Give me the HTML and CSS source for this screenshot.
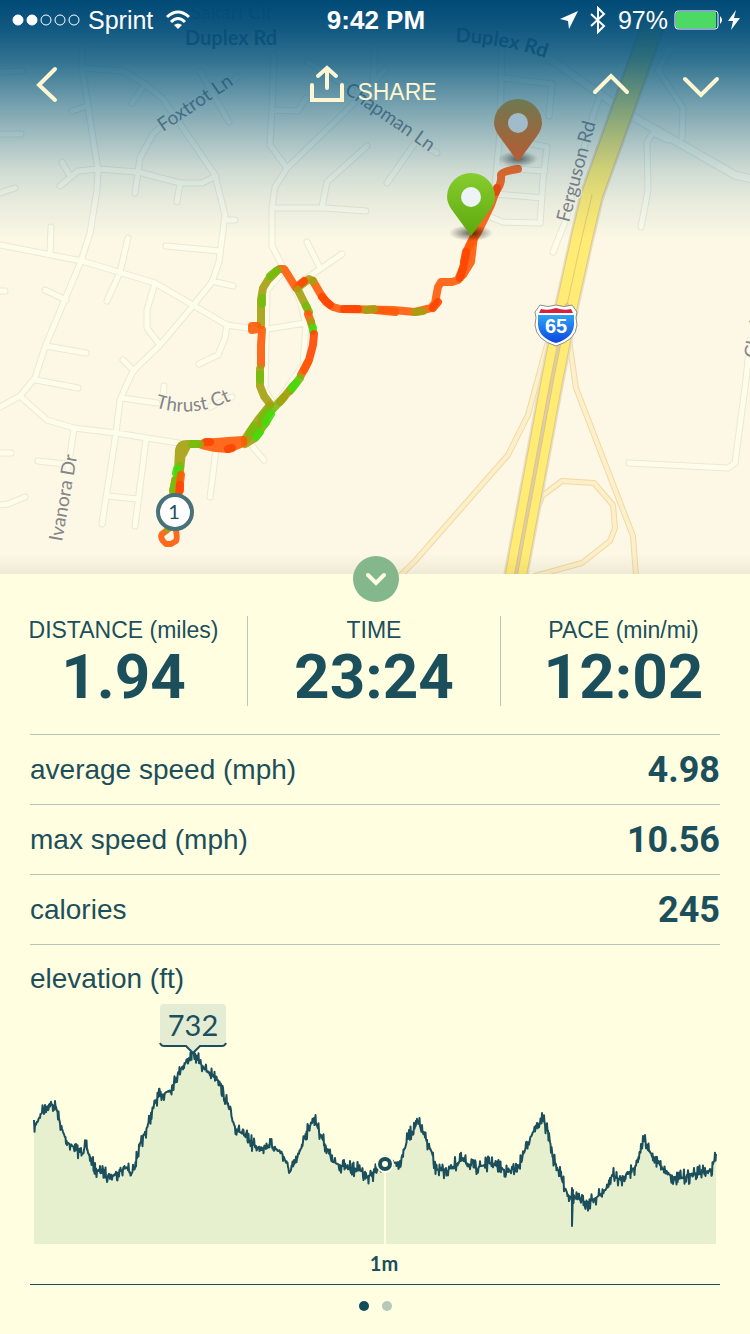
FILE: index.html
```html
<!DOCTYPE html>
<html lang="en">
<head>
    <meta charset="UTF-8">
    <meta name="viewport" content="width=device-width, initial-scale=1.0">
    <title>Run details</title>
    <link rel="stylesheet" href="styles.css">
</head>
<body>
    <header class="hero">
        <svg class="map" viewBox="0 0 750 574" role="img" aria-label="Map of the run">
            <defs>
                <linearGradient id="pinGreen" x1="0" y1="0" x2="0" y2="1">
                    <stop offset="0" stop-color="#86cd2e"/>
                    <stop offset="1" stop-color="#5ea80d"/>
                </linearGradient>
                <linearGradient id="pinBrown" x1="0" y1="0" x2="0" y2="1">
                    <stop offset="0" stop-color="#6c7a52"/>
                    <stop offset=".5" stop-color="#95693f"/>
                    <stop offset="1" stop-color="#b85c33"/>
                </linearGradient>
                <linearGradient id="shieldBlue" x1="0" y1="0" x2="0" y2="1">
                    <stop offset="0" stop-color="#2fa4f4"/>
                    <stop offset="1" stop-color="#0b45e0"/>
                </linearGradient>
                <radialGradient id="pinShadow">
                    <stop offset="0" stop-color="#000" stop-opacity=".6"/>
                    <stop offset="1" stop-color="#000" stop-opacity="0"/>
                </radialGradient>
                <linearGradient id="sky" x1="0" y1="0" x2="0" y2="1">
                    <stop offset="0" stop-color="#004a76"/>
                    <stop offset=".12" stop-color="#004d7a" stop-opacity=".93"/>
                    <stop offset=".25" stop-color="#00527c" stop-opacity=".81"/>
                    <stop offset=".42" stop-color="#00557f" stop-opacity=".56"/>
                    <stop offset=".55" stop-color="#005580" stop-opacity=".38"/>
                    <stop offset=".71" stop-color="#005580" stop-opacity=".18"/>
                    <stop offset=".84" stop-color="#005580" stop-opacity=".08"/>
                    <stop offset="1" stop-color="#005580" stop-opacity="0"/>
                </linearGradient>
                <linearGradient id="edge" x1="0" y1="0" x2="0" y2="1">
                    <stop offset="0" stop-color="#6b6040" stop-opacity="0"/>
                    <stop offset="1" stop-color="#6b6040" stop-opacity=".09"/>
                </linearGradient>

                <!-- side streets, stroked twice: casing, then surface -->
                <path id="streets" d="M82 40V68L98 170 97 190 90 233 81 261 45 347 35 378 20 396 0 407
                    M82 68L123 71 145 84 163 99 215 175 225 215 219 262 212 282 192 307 160 345 133 371 127 384 120 400 116 433 102 524
                    M145 84L132 103 M72 111L87 106 M62 162L70 176 M60 186L78 171 98 169 138 172 180 183 202 183 216 176
                    M163 125L153 134 140 158 138 172 135 193 M180 183L177 202 M200 71L229 122 M225 88L237 77
                    M274 55L272 110 270 145 287 168 275 187 272 208V246L300 300 306 325 303 365 274 407
                    M272 110L298 111 306 98 M287 168L345 112 385 70 M307 61L352 90 M322 207L327 182 367 146
                    M272 208L325 208 366 211 M0 72L22 71 M0 134L21 134 M0 193L15 188
                    M0 245L82 261 155 283 227 325 262 330 305 323 M51 227L50 254 M128 238L120 272 107 301
                    M166 246L220 251 M225 220H235 M212 281L233 286 M155 283L147 310V328L160 345
                    M227 325L225 338 218 355 199 364 M45 290L66 300 M46 346L86 353 M36 380L78 388 M123 360L134 371
                    M0 291H5 M307 242L320 268 M342 254L297 285 M283 272L267 290 265 390 274 405
                    M20 396L47 420 74 428 116 433 178 443 M74 428L70 455 68 468 M122 398L157 403 M164 386L163 398
                    M38 461L65 464 M0 453H11 M0 505L8 504 25 497 M146 439L135 526 M107 496L138 499
                    M216 450L210 497 M248 441L264 460 M210 407L232 397
                    M502 40L500 133 495 187 M503 78L552 84 549 116 M503 138L547 147 543 180 540 223 503 222 488 216
                    M500 168L545 171 M495 194L542 198 M415 143L387 183 M426 147L437 153
                    M672 45L658 70 683 108 682 138 M665 50H750 M668 140L653 133 647 142 648 190 641 227
                    M600 95L590 125 565 222 553 252 M375 45L373 90
                    M750 340L746 380 735 463 728 468 629 463 M0 44H750"/>
                <path id="ramps" d="M547 345L528 415 508 455 415 561 398 578 M569 340L576 388 633 536 636 576
                    M530 530L542 496 562 481 594 483 613 505 615 528 610 541 582 563 535 576"/>
                <path id="highway" d="M662 0L655 20 592 195 582 237 567 305 552 380 515 580"/>
                <path id="duplexCurve" d="M455 42Q510 44 554 61"/>
                <path id="chapmanCurve" d="M344 92C370 112 400 130 440 160"/>
                <path id="thrustCurve" d="M155 407Q195 420 238 397"/>
            </defs>

            <rect width="750" height="574" fill="#fcf8e5"/>
            <g fill="none" stroke-linecap="round" stroke-linejoin="round">
                <use href="#streets" stroke="#ece8d6" stroke-width="7"/>
                <path d="M540 52L630 115 735 175 752 179" stroke="#ece8d6" stroke-width="9"/>
                <use href="#streets" stroke="#fefdec" stroke-width="5"/>
                <path d="M540 52L630 115 735 175 752 179" stroke="#fefdec" stroke-width="7"/>
                <use href="#ramps" stroke="#f0d8a8" stroke-width="6"/>
                <use href="#ramps" stroke="#fdf0c8" stroke-width="4"/>
                <use href="#highway" stroke="#e4e0c8" stroke-width="25"/>
                <use href="#highway" stroke="#e9c77e" stroke-width="22"/>
                <use href="#highway" stroke="#ffec75" stroke-width="20"/>
                <path d="M592 195L582 237 567 305" stroke="#e8c877" stroke-width="1"/>
                <path d="M567 305L552 380 515 580" stroke="#e6c276" stroke-width="4"/>
                <path d="M567 305L552 380 515 580" stroke="#d9cfae" stroke-width="2"/>
            </g>

            <g class="street-name">
                <text class="faint" x="190" y="19">Sakari Cir</text>
                <text class="strong" x="185" y="45">Duplex Rd</text>
                <text class="strong"><textPath href="#duplexCurve">Duplex Rd</textPath></text>
                <text transform="translate(163 132) rotate(-34)">Foxtrot Ln</text>
                <text><textPath href="#chapmanCurve">Chapman Ln</textPath></text>
                <text transform="translate(569 223) rotate(-75)">Ferguson Rd</text>
                <text transform="translate(62 542) rotate(-80)">Ivanora Dr</text>
                <text><textPath href="#thrustCurve">Thrust Ct</textPath></text>
                <text transform="translate(757 359) rotate(-80)">Clark Rd</text>
            </g>

            <!-- interstate shield -->
            <g>
                <path d="M540 305Q548 308 556 305Q564 308 572 305L577 312Q575 317 577 325Q576 340 556 346Q536 340 535 325Q537 317 535 312Z" fill="#fff" stroke="#8f8f86" stroke-width="1"/>
                <path d="M541 309Q548 311 556 308Q564 311 571 309L573 313H539Z" fill="#d9203c"/>
                <path d="M538 315H574V325Q573 338 556 343Q539 338 538 325Z" fill="url(#shieldBlue)"/>
                <text class="shield-number" x="556" y="333">65</text>
            </g>

            <!-- route coloured by pace -->
            <g class="route">
                <path class="fast" d="M518 169Q502 171 501 175 502 184 496 191L491 205 478 232 467 250 463 268 458 280 452 282 441 282 438 287 435 303 431 308 415 312 393 310 340 309 333 307 326 302 320 293 313 281"/>
                <path class="fast" d="M474 236L471 262 463 275M395 312L375 310M474 236L469 246"/>
                <path class="hot" d="M344 309L358 309M330 305L322 297M463 268L460 278M438 302L433 308M466 252L464 262M497 188L496 192"/>
                <path class="mid" d="M313 281L309 279 297 288M366 310L374 309M415 312L423 311"/>
                <path class="hot" d="M299 285L304 281"/>
                <path class="fast" d="M296 288L288 275 284 269 280 269"/>
                <path class="mid" d="M278 270L268 280 263 288 261 300V325M298 290L307 308"/>
                <path class="slow" d="M276 271L270 276M306 306L309 312M262 298V304"/>
                <path class="fast" d="M257 326L252 326 252 330 257 329M262 330L261 345V365M308 314L311 322"/>
                <path class="mid" d="M260 369V386L264 396 270 404M311 322L312 326"/>
                <path class="slow" d="M260 374V380"/>
                <path class="lime" d="M313 328V331"/>
                <path class="hot" d="M314 334L313 345 309 360 304 370"/>
                <path class="fast" d="M308 362L301 375"/>
                <path class="slow" d="M300 378L290 391M284 397L270 412 255 430 246 440"/>
                <path class="mid" d="M293 386L280 402M270 405L258 420 245 439M266 422L255 438 245 444"/>
                <path class="slow" d="M268 410L262 417M254 426L250 432"/>
                <path class="lime" d="M271 414L265 424M260 432L256 437M296 383L292 388"/>
                <path class="fast" d="M243 443L228 449 215 448 202 445M243 440L228 441 204 443"/>
                <path class="hot" d="M228 449L232 448M206 442H210"/>
                <path class="mid" d="M200 444H187Q180 444 179 450L178 470M187 446L183 454M182 452L179 480M175 480L173 495"/>
                <path class="slow" d="M192 444H197M180 466L178 475M176 480L173 490"/>
                <path class="lime" d="M177 469L176 473"/>
                <path class="fast" d="M181 475L178 498"/>
                <path class="hot" d="M180 485V490"/>
                <path class="fast loop" d="M170 528L162 534Q160 537 163 541L166 544 171 544 176 541Q178 538 175 526"/>
                <path class="mid loop" d="M170 527L167 530"/>
            </g>

            <ellipse cx="471" cy="233" rx="22" ry="8" fill="url(#pinShadow)"/>
            <ellipse cx="518" cy="159" rx="20" ry="8" fill="url(#pinShadow)"/>
            <rect width="750" height="240" fill="url(#sky)"/>
            <path d="M518 162L499 136Q494 129 494 123A24 24 0 0 1 542 123Q542 129 537 136Z" fill="url(#pinBrown)"/>
            <circle cx="518" cy="123" r="10" fill="#a0bccb"/>
            <path d="M471 236L452 210Q447 203 447 197A24 24 0 0 1 495 197Q495 203 490 210Z" fill="url(#pinGreen)"/>
            <circle cx="471" cy="197" r="10" fill="#edf3f7"/>

            <circle cx="175" cy="512" r="17" fill="#fff" stroke="#48717a" stroke-width="4"/>
            <text class="mile-number" x="174" y="519">1</text>
            <rect y="554" width="750" height="20" fill="url(#edge)"/>
        </svg>

        <div class="overlay">
            <div class="status-bar">
                <div class="status-left">
                    <svg width="68" height="14" viewBox="0 0 68 14" aria-hidden="true">
                        <g fill="#fff" stroke="#fff">
                            <circle cx="6" cy="7" r="5"/>
                            <circle cx="20" cy="7" r="5"/>
                            <circle cx="34" cy="7" r="5" fill="none"/>
                            <circle cx="48" cy="7" r="5" fill="none"/>
                            <circle cx="62" cy="7" r="5" fill="none"/>
                        </g>
                    </svg>
                    <span>Sprint</span>
                    <svg class="wifi" width="26" height="20" viewBox="0 0 26 20" aria-hidden="true">
                        <g fill="none" stroke="#fff" stroke-width="3">
                            <path d="M2 7Q13-3 24 7"/>
                            <path d="M6 12Q13 5 20 12"/>
                        </g>
                        <path d="M9 15Q13 12 17 15L13 19Z" fill="#fff"/>
                    </svg>
                </div>
                <div class="clock">9:42 PM</div>
                <div class="status-right">
                    <svg class="service" width="18" height="18" viewBox="0 0 18 18" aria-hidden="true">
                        <path d="M18 0L9 18 8 10 0 8Z" fill="#fff"/>
                    </svg>
                    <svg class="service" width="16" height="28" viewBox="0 0 16 28" aria-hidden="true">
                        <path d="M1 8L14 20 8 26V2L14 8 1 20" fill="none" stroke="#fff" stroke-width="2"/>
                    </svg>
                    <span>97%</span>
                    <svg width="48" height="20" viewBox="0 0 48 20" aria-hidden="true">
                        <rect x="1" y="1" width="43" height="18" rx="3" fill="none" stroke="#fff" stroke-width="1"/>
                        <rect x="2" y="2" width="40" height="16" rx="1" fill="#4cd964"/>
                        <path d="M46 6Q50 10 46 14Z" fill="#fff"/>
                    </svg>
                    <svg width="12" height="20" viewBox="0 0 12 20" aria-hidden="true">
                        <path d="M8 0L0 11H5L3 20 12 8H6Z" fill="#fff"/>
                    </svg>
                </div>
            </div>
            <nav class="nav-bar">
                <button class="icon-button" aria-label="Back">
                    <svg width="34" height="40" viewBox="0 0 34 40"><path d="M29 5L13 21 29 36"/></svg>
                </button>
                <button class="icon-button share">
                    <svg width="36" height="40" viewBox="0 0 36 40"><path d="M3 21V36H33V21M18 24V4M9 12L18 4 27 12"/></svg>
                    <span>SHARE</span>
                </button>
                <div class="nav-arrows">
                    <button class="icon-button" aria-label="Previous run">
                        <svg width="38" height="40" viewBox="0 0 38 40"><path d="M3 28L19 12 35 28"/></svg>
                    </button>
                    <button class="icon-button" aria-label="Next run">
                        <svg width="38" height="40" viewBox="0 0 38 40"><path d="M3 15L19 31 35 15"/></svg>
                    </button>
                </div>
            </nav>
        </div>
    </header>

    <main class="panel">
        <button class="toggle" aria-label="Hide details">
            <svg width="22" height="14" viewBox="0 0 22 14"><path d="M3 3L11 11 19 3"/></svg>
        </button>

        <section class="stats">
            <div class="stat">
                <div class="stat-label">DISTANCE (miles)</div>
                <div class="stat-value">1.94</div>
            </div>
            <div class="stat">
                <div class="stat-label">TIME</div>
                <div class="stat-value">23:24</div>
            </div>
            <div class="stat">
                <div class="stat-label">PACE (min/mi)</div>
                <div class="stat-value">12:02</div>
            </div>
        </section>

        <dl class="details">
            <div class="row">
                <dt>average speed (mph)</dt>
                <dd>4.98</dd>
            </div>
            <div class="row">
                <dt>max speed (mph)</dt>
                <dd>10.56</dd>
            </div>
            <div class="row">
                <dt>calories</dt>
                <dd>245</dd>
            </div>
        </dl>

        <section class="elevation">
            <h2>elevation (ft)</h2>
            <svg class="chart" viewBox="30 1000 690 284" role="img" aria-label="Elevation chart">
                <path id="area" fill="#e6f0cf"/>
                <path d="M385 1170V1244" stroke="#fffee0" stroke-width="2"/>
                <path id="line" fill="none" stroke="#1c4f5c" stroke-width="2" stroke-linejoin="round"/>
                <circle cx="385" cy="1164" r="9" fill="#fffee0"/>
                <circle cx="385" cy="1164" r="5" fill="#fffee0" stroke="#1c4f5c" stroke-width="4"/>
                <path d="M164 1004H222Q226 1004 226 1008V1045H200L193 1053 186 1045H160V1008Q160 1004 164 1004Z" fill="#e4ecd4"/>
                <path d="M160 1043Q161 1046 164 1046H186L193 1053 200 1046H222Q225 1046 226 1043" fill="none" stroke="#1c4f5c" stroke-width="2"/>
                <text class="peak" x="193" y="1036">732</text>
                <text class="tick" x="384" y="1271">1m</text>
            </svg>
        </section>

        <div class="pager">
            <button class="dot active" aria-label="Page 1"></button>
            <button class="dot" aria-label="Page 2"></button>
        </div>
    </main>

    <script>
        const points = [
            [34, 1128], [43, 1110], [50, 1104], [56, 1107], [61, 1127], [67, 1142], [80, 1152], [86, 1147],
            [95, 1170], [112, 1176], [127, 1167], [131, 1176], [137, 1157], [147, 1127], [157, 1098], [170, 1090],
            [180, 1070], [193, 1053], [207, 1072], [217, 1077], [227, 1103], [235, 1127], [257, 1148], [270, 1145],
            [282, 1153], [290, 1172], [298, 1157], [305, 1135], [314, 1118], [322, 1138], [333, 1162], [347, 1168],
            [362, 1170], [367, 1177], [375, 1172], [385, 1164], [400, 1162], [408, 1138], [418, 1122], [423, 1133],
            [432, 1153], [434, 1168], [445, 1172], [462, 1160], [475, 1168], [491, 1163], [508, 1172], [518, 1168],
            [528, 1142], [535, 1128], [543, 1120], [548, 1132], [553, 1157], [562, 1180], [568, 1195], [572, 1197],
            [588, 1203], [600, 1195], [608, 1187], [612, 1175], [620, 1180], [635, 1167], [644, 1140], [648, 1150],
            [662, 1167], [675, 1180], [692, 1175], [711, 1171], [716, 1154]
        ]

        // small repeatable wobble, like raw gps altitude
        let seed = 7
        function wobble() {
            seed = (seed * 16807) % 2147483647
            const r = seed / 2147483647 - 0.5
            return r * r * r * 64
        }

        let d = ""
        for (let i = 0; i < points.length - 1; i++) {
            const [x1, y1] = points[i]
            const [x2, y2] = points[i + 1]
            for (let x = x1; x < x2; x += 0.5) {
                const y = y1 + (y2 - y1) * (x - x1) / (x2 - x1) + wobble()
                d += "L" + x + " " + y.toFixed(1)
            }
            if (x2 === 572) d += "L572 1188L572 1226L573 1190"
        }
        d = "M" + d.slice(1) + "L716 1154"
        document.getElementById("line").setAttribute("d", d)
        document.getElementById("area").setAttribute("d", d + "V1244H34Z")
    </script>
</body>
</html>
```

FILE: styles.css
```css
* {
    box-sizing: border-box;
}
body {
    margin: 0;
    background-color: #fffee0;
    color: #1c4f5c;
    font-family: "Liberation Sans", Arial, sans-serif;
}
button {
    padding: 0;
    border: 0;
    background: none;
    font: inherit;
    color: inherit;
}
svg {
    display: block;
}

/* map */
.hero {
    position: relative;
}
.map {
    width: 100%;
    height: auto;
}
.street-name text {
    font-family: Lato, sans-serif;
    font-size: 19px;
    fill: #85858a;
    stroke: #fcf8e5;
    stroke-width: 3px;
    paint-order: stroke;
}
.street-name .strong {
    font-size: 20px;
    font-weight: bold;
    fill: #5a6a78;
    stroke: none;
}
.street-name .faint {
    font-size: 20px;
    stroke: none;
}
.shield-number {
    font-size: 20px;
    font-weight: bold;
    fill: #fff;
    text-anchor: middle;
}
.mile-number {
    font-family: Lato, sans-serif;
    font-size: 20px;
    fill: #1c4f5c;
    text-anchor: middle;
}
.route path {
    fill: none;
    stroke-width: 8px;
    stroke-linecap: round;
    stroke-linejoin: round;
    stroke-opacity: 0.9;
}
.route .loop {
    stroke-width: 6px;
}
.route .fast {
    stroke: #ff5a08;
}
.route .hot {
    stroke: #ff4500;
}
.route .mid {
    stroke: #a5a010;
}
.route .slow {
    stroke: #74bd0c;
}
.route .lime {
    stroke: #45dc0c;
}

/* bars over the map */
.overlay {
    position: absolute;
    top: 0;
    left: 0;
    right: 0;
}
.status-bar {
    display: grid;
    grid-template-columns: 1fr auto 1fr;
    align-items: center;
    height: 40px;
    padding: 0 10px 0 12px;
    color: #fff;
    font-size: 25px;
}
.status-left,
.status-right {
    display: flex;
    align-items: center;
    gap: 8px;
}
.status-left .wifi {
    margin-left: 4px;
}
.status-right {
    justify-content: flex-end;
    gap: 6px;
}
.status-right .service {
    margin-right: 6px;
}
.clock {
    font-size: 26px;
    font-weight: bold;
}
.nav-bar {
    display: grid;
    grid-template-columns: 1fr auto 1fr;
    align-items: center;
    padding: 24px 30px 24px 26px;
    color: #fcf6d3;
}
.icon-button {
    display: flex;
    justify-self: start;
}
.icon-button svg {
    fill: none;
    stroke: #fcf6d3;
    stroke-width: 4px;
    stroke-linecap: round;
}
.share {
    align-items: flex-end;
    gap: 12px;
    font-size: 23px;
    line-height: 24px;
}
.nav-arrows {
    display: flex;
    justify-content: flex-end;
    gap: 52px;
}

/* details panel */
.panel {
    position: relative;
    padding: 42px 30px 0;
}
.toggle {
    position: absolute;
    top: -18px;
    left: 50%;
    display: flex;
    align-items: center;
    justify-content: center;
    width: 46px;
    height: 46px;
    margin-left: -22px;
    border-radius: 50%;
    background-color: #84b88c;
}
.toggle svg {
    fill: none;
    stroke: #fffee0;
    stroke-width: 4px;
    stroke-linecap: round;
}
.stats {
    display: grid;
    grid-template-columns: 247fr 253fr 246fr;
    margin: 0 -26px 28px -30px;
}
.stat {
    text-align: center;
}
.stat + .stat {
    border-left: 1px solid #b9c9b6;
}
.stat-label {
    font-size: 23px;
    line-height: 28px;
}
.stat-value {
    padding-top: 4px;
    font-family: Roboto, sans-serif;
    font-size: 62px;
    font-weight: bold;
    line-height: 58px;
}
.details {
    margin: 0;
    border-top: 1px solid #b4c6b8;
}
.row {
    display: flex;
    justify-content: space-between;
    align-items: center;
    height: 70px;
    border-bottom: 1px solid #b4c6b8;
}
.row dt {
    font-size: 28px;
}
.row dd {
    margin: 0;
    font-family: Roboto, sans-serif;
    font-size: 36px;
    font-weight: bold;
}
.elevation {
    padding-top: 18px;
    border-bottom: 1px solid #1c4f5c;
}
.elevation h2 {
    margin: 0 0 5px;
    font-size: 28px;
    font-weight: normal;
    line-height: 32px;
}
.chart {
    width: 100%;
    height: auto;
}
.peak {
    font-family: Lato, sans-serif;
    font-size: 29px;
    fill: #1c4f5c;
    text-anchor: middle;
}
.tick {
    font-family: Lato, sans-serif;
    font-size: 20px;
    font-weight: bold;
    fill: #1c4f5c;
    text-anchor: middle;
}
.pager {
    display: flex;
    justify-content: center;
    gap: 13px;
    padding: 16px 0 23px;
}
.dot {
    width: 10px;
    height: 10px;
    border-radius: 50%;
    background-color: #b6c9b8;
}
.dot.active {
    background-color: #0f4c5c;
}
```
